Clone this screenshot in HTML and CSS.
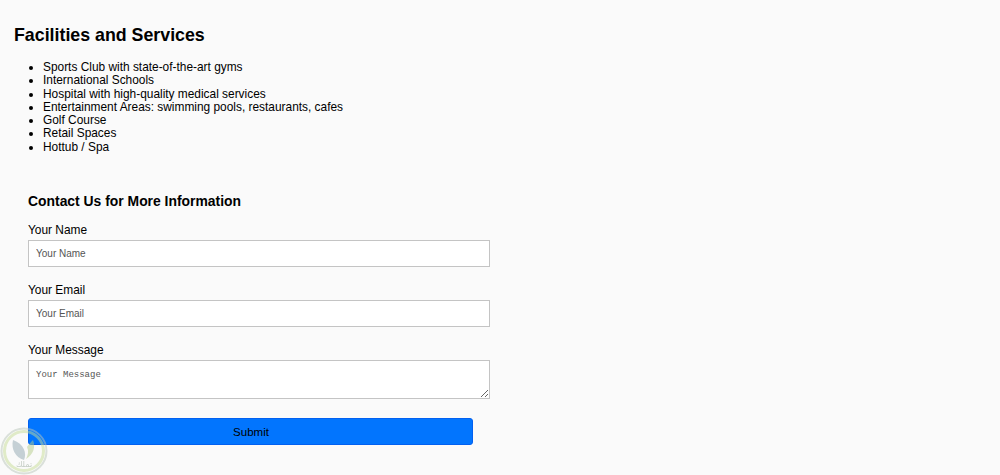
FILE: index.html
```html
<!DOCTYPE html>
<html lang="en">
<head>
    <meta charset="UTF-8">
    <meta name="viewport" content="width=device-width, initial-scale=1.0">
    <title>Facilities and Services</title>
    <link rel="stylesheet" href="styles.css">
</head>
<body>

    <section class="facilities">
        <h2>Facilities and Services</h2>
        <ul>
            <li>Sports Club with state-of-the-art gyms</li>
            <li>International Schools</li>
            <li>Hospital with high-quality medical services</li>
            <li>Entertainment Areas: swimming pools, restaurants, cafes</li>
            <li>Golf Course</li>
            <li>Retail Spaces</li>
            <li>Hottub / Spa</li>
        </ul>
    </section>

    <section class="contact">
        <h3>Contact Us for More Information</h3>
        <form>
            <div class="field">
                <label for="name">Your Name</label>
                <input type="text" id="name" placeholder="Your Name">
            </div>
            <div class="field">
                <label for="email">Your Email</label>
                <input type="email" id="email" placeholder="Your Email">
            </div>
            <div class="field">
                <label for="message">Your Message</label>
                <textarea id="message" placeholder="Your Message"></textarea>
            </div>
            <button type="submit">Submit</button>
        </form>
    </section>

    <div class="badge">
        <svg width="48" height="48" viewBox="0 0 48 48">
            <circle cx="24" cy="24" r="22.5" fill="none" stroke="#b9c6b9" stroke-width="2"/>
            <circle cx="24" cy="24" r="19.5" fill="none" stroke="#c6dc96" stroke-width="3"/>
            <path d="M13 13 C11 22 15 30 24 33 C27 26 24 17 13 13 Z" fill="#8fa6b0"/>
            <path d="M26 32 C33 28 36 20 33 13 C31 15 29 17 27 20 C29 24 28 28 26 32 Z" fill="#b4cc88"/>
            <text x="24" y="40" text-anchor="middle" class="badge-text">تملك</text>
        </svg>
    </div>

</body>
</html>
```

FILE: styles.css
```css
body {
    font-family: 'Liberation Sans', Arial, sans-serif;
    background-color: #fafafa;
    margin: 0;
    color: #000;
    font-size: 11.9px;
    height: 475px;
    overflow: hidden;
}

.facilities {
    padding: 24px 0 0 14px;
}

h2 {
    font-size: 17.8px;
    line-height: 22px;
    margin: 0;
}

ul {
    margin: 15px 0 0;
    padding-left: 29px;
    line-height: 13.3px;
}

.contact {
    width: 462px;
    margin: 39px 0 0 28px;
}

h3 {
    font-size: 13.9px;
    line-height: 17px;
    margin: 0 0 13px;
}

.field {
    margin-bottom: 16px;
}

label {
    display: block;
    line-height: 14px;
    margin-bottom: 3px;
}

input, textarea {
    display: block;
    width: 100%;
    box-sizing: border-box;
    background-color: #fff;
    border: 1px solid #c4c4c4;
    padding: 0 7px;
    margin: 0;
    font-size: 10px;
}

input {
    height: 27px;
    font-family: 'Liberation Sans', Arial, sans-serif;
}

textarea {
    height: 39px;
    padding-top: 9px;
    font-family: 'Liberation Mono', monospace;
    font-size: 9px;
}

::placeholder {
    color: #555;
}

button {
    display: block;
    width: 445px;
    height: 27px;
    margin-top: 19px;
    background-color: #0275fe;
    border: 1px solid #0260f0;
    border-radius: 3px;
    color: #000;
    font-family: 'Liberation Sans', Arial, sans-serif;
    font-size: 11.5px;
    padding: 0 0 0 1px;
}

.badge {
    position: fixed;
    left: 0;
    bottom: 0;
    width: 48px;
    height: 48px;
    opacity: 0.5;
}

.badge-text {
    font-family: 'Noto Sans', 'DejaVu Sans', sans-serif;
    font-size: 8px;
    fill: #8fa08f;
}
```
